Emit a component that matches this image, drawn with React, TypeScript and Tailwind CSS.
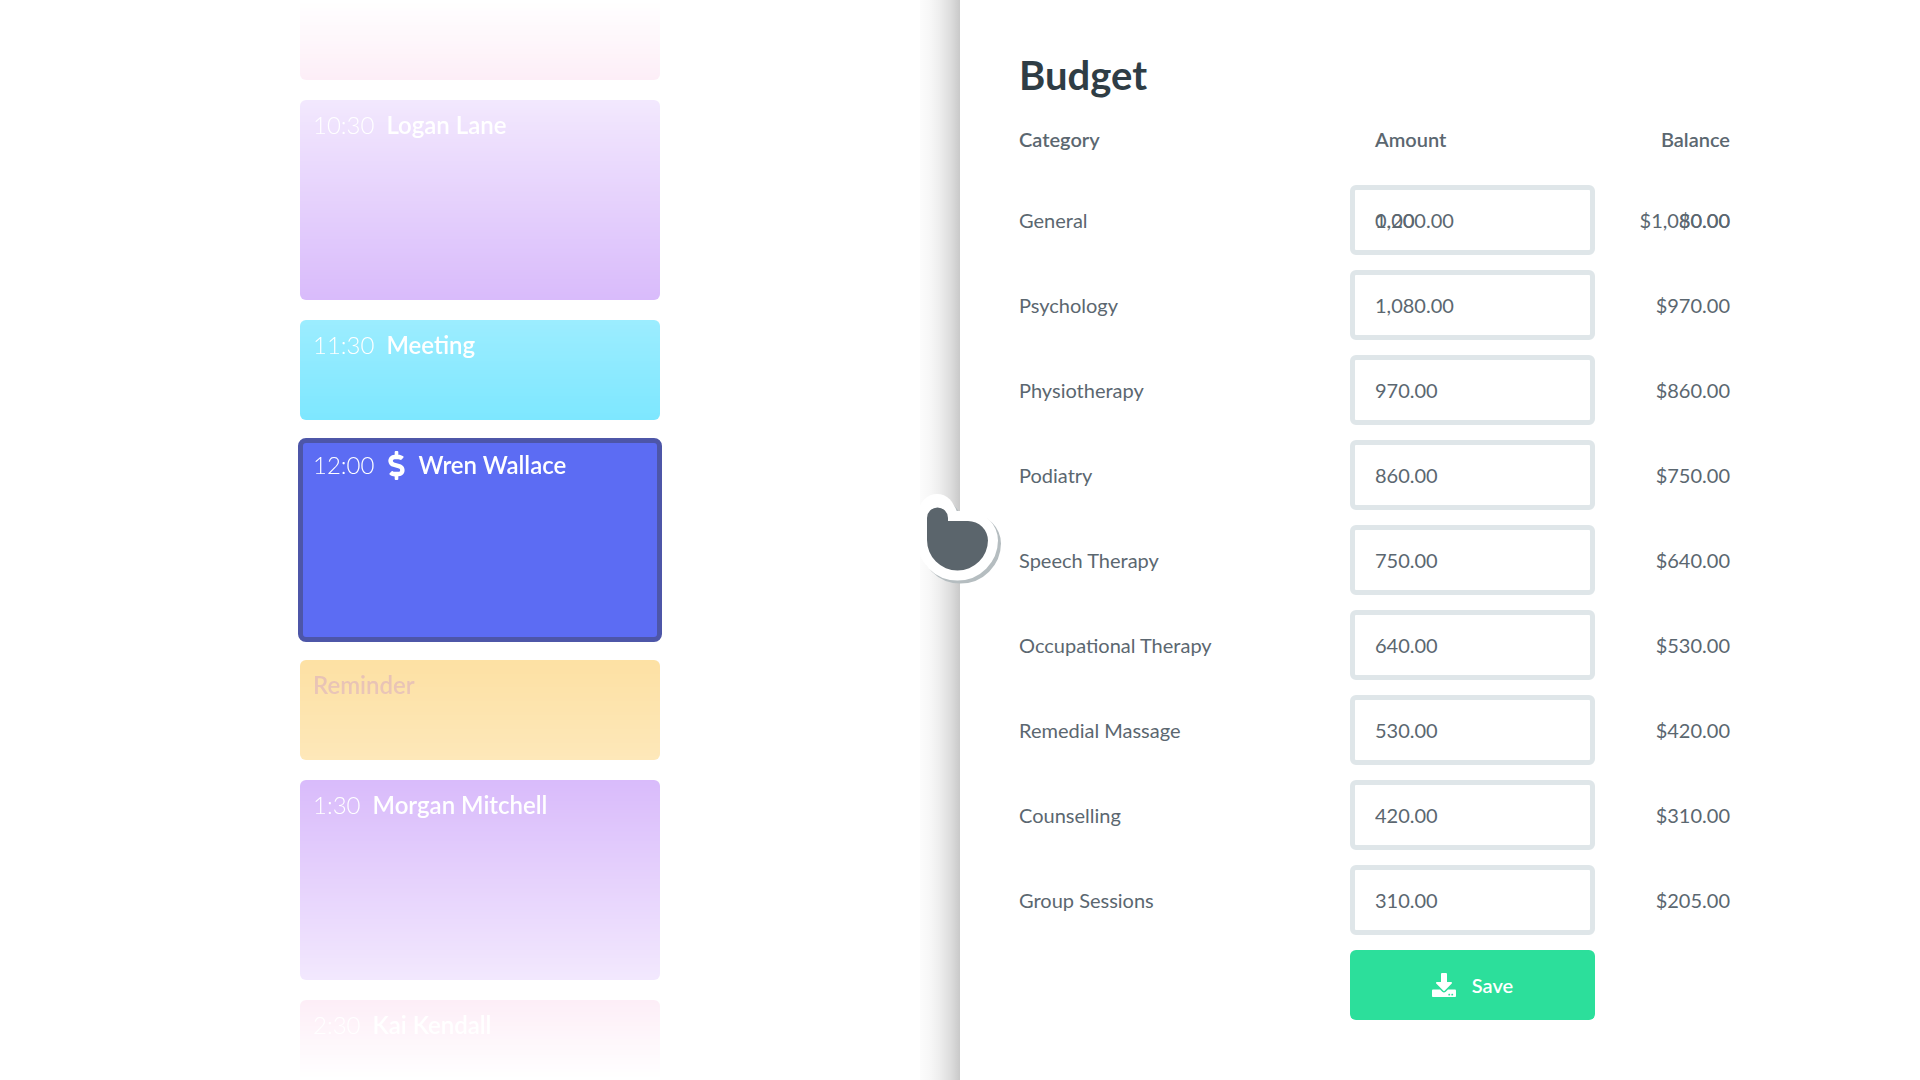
import React from 'react';
import { FaDollarSign, FaDownload } from 'react-icons/fa';

interface Appointment {
  time?: string;
  name: string;
  height: string;
  color: string;
}

const appointments: Appointment[] = [
  { name: '', height: 'h-[200px]', color: 'bg-[#f4a1d3]' },
  { time: '10:30', name: 'Logan Lane', height: 'h-[200px]', color: 'bg-[#c79bf9]' },
  { time: '11:30', name: 'Meeting', height: 'h-[100px]', color: 'bg-[#77e6ff]' },
];

const laterAppointments: Appointment[] = [
  { time: '1:30', name: 'Morgan Mitchell', height: 'h-[200px]', color: 'bg-[#c79bf9]' },
  { time: '2:30', name: 'Kai Kendall', height: 'h-[200px]', color: 'bg-[#f4a1d3]' },
];

const budgetRows = [
  { category: 'General', amount: '1,200.00', balance: '$1,080.00' },
  { category: 'Psychology', amount: '1,080.00', balance: '$970.00' },
  { category: 'Physiotherapy', amount: '970.00', balance: '$860.00' },
  { category: 'Podiatry', amount: '860.00', balance: '$750.00' },
  { category: 'Speech Therapy', amount: '750.00', balance: '$640.00' },
  { category: 'Occupational Therapy', amount: '640.00', balance: '$530.00' },
  { category: 'Remedial Massage', amount: '530.00', balance: '$420.00' },
  { category: 'Counselling', amount: '420.00', balance: '$310.00' },
  { category: 'Group Sessions', amount: '310.00', balance: '$205.00' },
];

const AppointmentCard = ({ time, name, height, color }: Appointment) => (
  <div className={`w-[360px] shrink-0 rounded-md px-[13px] pt-[10px] text-[24px] leading-[30px] text-white ${height} ${color}`}>
    {time && <span className="mr-3 font-light">{time}</span>}
    <span className="font-semibold">{name}</span>
  </div>
);

const Calendar = () => (
  <div className="flex h-screen w-[960px] shrink-0 flex-col items-center justify-center gap-5 overflow-hidden [mask-image:linear-gradient(to_bottom,transparent_0,black_440px,black_640px,transparent_1080px)]">
    {appointments.map((item, i) => (
      <AppointmentCard key={i} {...item} />
    ))}

    {/* Selected appointment */}
    <div className="-my-[2px] flex h-[204px] w-[364px] shrink-0 items-start rounded-lg border-[5px] border-[#4d56a8] bg-[#5c6cf3] px-[10px] pt-[7px] text-[24px] leading-[30px] text-white">
      <span className="font-light">12:00</span>
      <FaDollarSign size={29} className="mx-[7px] mt-[1px] ml-[8px]" />
      <span className="font-semibold">Wren Wallace</span>
    </div>

    <div className="h-[100px] w-[360px] shrink-0 rounded-md bg-[#fddf9f] px-[13px] pt-[10px] text-[24px] leading-[30px] font-semibold text-[#e6bdae]">
      Reminder
    </div>

    {laterAppointments.map((item, i) => (
      <AppointmentCard key={i} {...item} />
    ))}
  </div>
);

const Budget = () => (
  <div className="relative flex h-screen w-[960px] shrink-0 flex-col bg-white pt-[51px] pl-[58px] text-[20px] text-[#5b6770]">
    <div className="absolute top-0 bottom-0 right-full w-10 bg-[linear-gradient(to_right,rgba(0,0,0,0.01),rgba(0,0,0,0.03)_25%,rgba(0,0,0,0.07)_50%,rgba(0,0,0,0.13)_75%,rgba(0,0,0,0.21))]" />

    <h1 className="pl-px text-[40px] leading-[48px] font-bold text-[#2f3d45]">Budget</h1>

    <div className="mt-[25px] mb-[31px] grid h-[30px] w-[712px] grid-cols-[332px_245px_135px] items-center leading-[30px] font-semibold">
      <div className="pl-px">Category</div>
      <div className="pl-[25px]">Amount</div>
      <div className="text-right">Balance</div>
    </div>

    <div className="grid w-[712px] grid-cols-[332px_245px_135px] items-center gap-y-[15px]">
      {budgetRows.map((row, i) => (
        <React.Fragment key={row.category}>
          <div className="pl-px">{row.category}</div>
          <div className="relative">
            <input
              readOnly
              value={row.amount}
              className="h-[70px] w-full rounded-md border-[5px] border-[#dfe6e9] bg-white px-5 text-[20px] text-[#5b6770] outline-none"
            />
            {i === 0 && (
              <span className="pointer-events-none absolute top-[20px] left-[25px] leading-[30px]">0.00</span>
            )}
          </div>
          <div className="relative text-right">
            {row.balance}
            {i === 0 && <span className="absolute right-0">$0.00</span>}
          </div>
        </React.Fragment>
      ))}

      <div />
      <button className="flex h-[70px] items-center justify-center gap-[16px] rounded-md bg-[#2cdf9b] font-semibold text-white">
        <FaDownload size={24} />
        Save
      </button>
    </div>
  </div>
);

// Drag cursor sitting on the panel edge
const HandCursor = () => {
  const hand = 'M927 518a10.5 10.5 0 0 1 21 0v3h20a20 20 0 0 1 20 20v-1v0a30.5 30.5 0 0 1-61 0z';
  return (
    <svg className="absolute top-[480px] left-[900px]" width="120" height="120" viewBox="900 480 120 120">
      <path d={hand} transform="translate(3 3)" fill="#b5bdc0" stroke="#b5bdc0" strokeWidth="20" strokeLinejoin="round" />
      <circle cx="937" cy="512" r="18" fill="#fff" />
      <path d={hand} fill="#fff" stroke="#fff" strokeWidth="20" strokeLinejoin="round" />
      <path d={hand} fill="#5b656c" />
    </svg>
  );
};

export default function App() {
  return (
    <div className="relative flex h-screen w-full overflow-hidden bg-white font-[Lato,sans-serif]">
      <Calendar />
      <Budget />
      <HandCursor />
    </div>
  );
}
